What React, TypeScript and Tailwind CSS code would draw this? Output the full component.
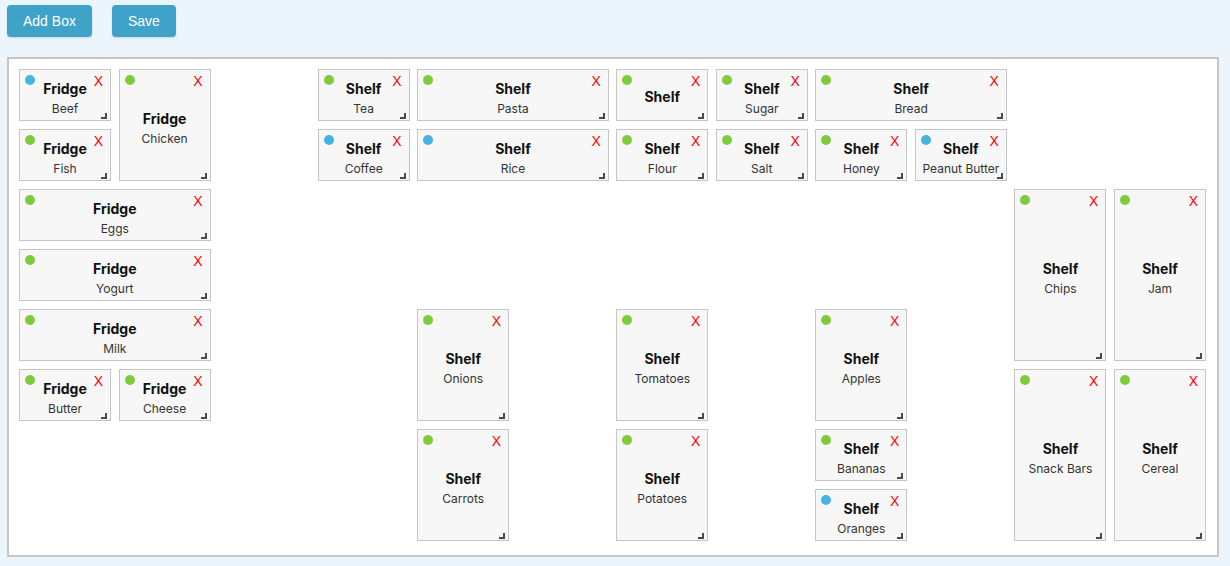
import React from "react";

type Slot = {
  id: string;
  title: string;
  label: string;
  status: "ok" | "new";
  pos: string;
};

// grid placement is written out so Tailwind picks every class up
const SLOTS: Slot[] = [
  { id: "beef", title: "Fridge", label: "Beef", status: "new", pos: "col-start-1 row-start-1" },
  { id: "chicken", title: "Fridge", label: "Chicken", status: "ok", pos: "col-start-2 row-start-1 row-span-2" },
  { id: "fish", title: "Fridge", label: "Fish", status: "ok", pos: "col-start-1 row-start-2" },
  { id: "eggs", title: "Fridge", label: "Eggs", status: "ok", pos: "col-start-1 row-start-3 col-span-2" },
  { id: "yogurt", title: "Fridge", label: "Yogurt", status: "ok", pos: "col-start-1 row-start-4 col-span-2" },
  { id: "milk", title: "Fridge", label: "Milk", status: "ok", pos: "col-start-1 row-start-5 col-span-2" },
  { id: "butter", title: "Fridge", label: "Butter", status: "ok", pos: "col-start-1 row-start-6" },
  { id: "cheese", title: "Fridge", label: "Cheese", status: "ok", pos: "col-start-2 row-start-6" },
  { id: "tea", title: "Shelf", label: "Tea", status: "ok", pos: "col-start-4 row-start-1" },
  { id: "pasta", title: "Shelf", label: "Pasta", status: "ok", pos: "col-start-5 row-start-1 col-span-2" },
  { id: "empty", title: "Shelf", label: "", status: "ok", pos: "col-start-7 row-start-1" },
  { id: "sugar", title: "Shelf", label: "Sugar", status: "ok", pos: "col-start-8 row-start-1" },
  { id: "bread", title: "Shelf", label: "Bread", status: "ok", pos: "col-start-9 row-start-1 col-span-2" },
  { id: "coffee", title: "Shelf", label: "Coffee", status: "new", pos: "col-start-4 row-start-2" },
  { id: "rice", title: "Shelf", label: "Rice", status: "new", pos: "col-start-5 row-start-2 col-span-2" },
  { id: "flour", title: "Shelf", label: "Flour", status: "ok", pos: "col-start-7 row-start-2" },
  { id: "salt", title: "Shelf", label: "Salt", status: "ok", pos: "col-start-8 row-start-2" },
  { id: "honey", title: "Shelf", label: "Honey", status: "ok", pos: "col-start-9 row-start-2" },
  { id: "pb", title: "Shelf", label: "Peanut Butter", status: "new", pos: "col-start-10 row-start-2" },
  { id: "chips", title: "Shelf", label: "Chips", status: "ok", pos: "col-start-11 row-start-3 row-span-3" },
  { id: "jam", title: "Shelf", label: "Jam", status: "ok", pos: "col-start-12 row-start-3 row-span-3" },
  { id: "onions", title: "Shelf", label: "Onions", status: "ok", pos: "col-start-5 row-start-5 row-span-2" },
  { id: "tomatoes", title: "Shelf", label: "Tomatoes", status: "ok", pos: "col-start-7 row-start-5 row-span-2" },
  { id: "apples", title: "Shelf", label: "Apples", status: "ok", pos: "col-start-9 row-start-5 row-span-2" },
  { id: "snacks", title: "Shelf", label: "Snack Bars", status: "ok", pos: "col-start-11 row-start-6 row-span-3" },
  { id: "cereal", title: "Shelf", label: "Cereal", status: "ok", pos: "col-start-12 row-start-6 row-span-3" },
  { id: "carrots", title: "Shelf", label: "Carrots", status: "ok", pos: "col-start-5 row-start-7 row-span-2" },
  { id: "potatoes", title: "Shelf", label: "Potatoes", status: "ok", pos: "col-start-7 row-start-7 row-span-2" },
  { id: "bananas", title: "Shelf", label: "Bananas", status: "ok", pos: "col-start-9 row-start-7" },
  { id: "oranges", title: "Shelf", label: "Oranges", status: "new", pos: "col-start-9 row-start-8" },
];

function Box({ slot }: { slot: Slot }) {
  return (
    <div
      className={`${slot.pos} relative flex flex-col items-center justify-center border border-[#c6c6c6] bg-[#f7f7f7] ${slot.label ? "pt-[8px]" : "pt-[4px]"}`}
    >
      <span
        className={`absolute left-[5px] top-[5px] h-[10px] w-[10px] rounded-full ${slot.status === "new" ? "bg-[#45b4e2]" : "bg-[#80cb3c]"}`}
      />
      <button className="absolute right-[7px] top-[2px] text-[14px] leading-[18px] text-[#ff0000] font-['Liberation_Sans',Arial,sans-serif]">
        X
      </button>
      <div className="text-[14px] font-bold leading-[20px] text-[#111]">{slot.title}</div>
      {slot.label && <div className="text-[12px] leading-[20px] text-[#333] whitespace-nowrap">{slot.label}</div>}
      <span className="absolute bottom-[1px] right-[3px] h-[6px] w-[6px] border-b-2 border-r-2 border-[#4a4a4a]" />
    </div>
  );
}

export default function App() {
  return (
    <div className="min-h-[566px] w-full bg-[#ecf4fc] pt-[5px] font-['Inter',sans-serif]">
      <div className="flex gap-[20px] px-[7px]">
        <button className="h-[32px] rounded-[4px] bg-[#3fa3c9] px-[16px] text-[14px] text-white shadow-[0_1px_2px_rgba(0,0,0,0.12)] font-['Liberation_Sans',Arial,sans-serif]">
          Add Box
        </button>
        <button className="h-[32px] rounded-[4px] bg-[#3fa3c9] px-[16px] text-[14px] text-white shadow-[0_1px_2px_rgba(0,0,0,0.12)] font-['Liberation_Sans',Arial,sans-serif]">
          Save
        </button>
      </div>

      {/* board */}
      <div className="ml-[7px] mt-[20px] h-[500px] w-[1212px] border-2 border-[#c6c6c6] bg-white pl-[10px] pr-[11px] pt-[10px]">
        <div className="grid grid-cols-[repeat(12,minmax(0,1fr))] auto-rows-[52px] gap-x-[7.5px] gap-y-[8px]">
          {SLOTS.map((s) => (
            <Box key={s.id} slot={s} />
          ))}
        </div>
      </div>
    </div>
  );
}
